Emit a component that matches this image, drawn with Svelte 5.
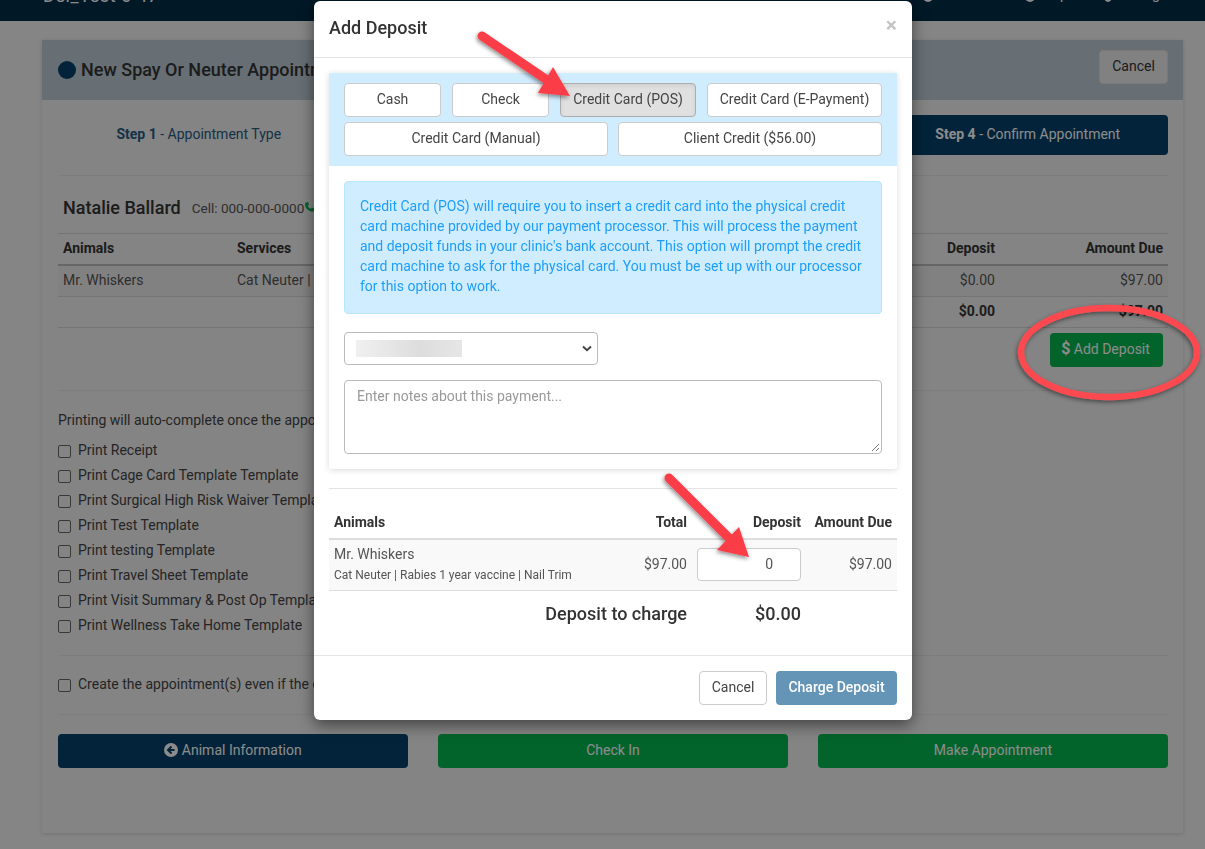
<script>
	const tabsTop = [
		{ label: 'Cash', w: 97 },
		{ label: 'Check', w: 97 },
		{ label: 'Credit Card (POS)', w: 136, active: true },
		{ label: 'Credit Card (E-Payment)', w: 175 }
	];
	const prints = [
		'Print Receipt',
		'Print Cage Card Template Template',
		'Print Surgical High Risk Waiver Template',
		'Print Test Template',
		'Print testing Template',
		'Print Travel Sheet Template',
		'Print Visit Summary & Post Op Template',
		'Print Wellness Take Home Template'
	];
</script>

<div class="page">
	<nav class="topbar">
		<span class="brand">Dei_Test 0 47</span>
		<span class="nav-right">
			<i class="ic first"></i>
			<i class="ic"></i><span>Help</span>
			<i class="ic small"></i><span>Settings</span>
		</span>
	</nav>

	<section class="card">
		<header class="card-head">
			<h2><span class="dot"></span> New Spay Or Neuter Appointment</h2>
			<button class="btn ghost">Cancel</button>
		</header>
		<div class="card-body">
			<div class="steps">
				<div class="step first"><b>Step 1</b> - Appointment Type</div>
				<div class="step"></div>
				<div class="step"></div>
				<div class="step on"><b>Step 4</b> - Confirm Appointment</div>
			</div>
			<hr class="steps-hr" />
			<div class="client"><span class="name">Natalie Ballard</span><span class="cell">Cell: 000-000-0000</span>
				<svg class="phone" viewBox="0 0 12 12" width="11" height="12"><path d="M2 1 L4.500 .5 L5.500 3.500 L4 4.500 Q5 7 7.500 8 L8.500 6.500 L11.500 7.500 L11 10 Q10 11.500 8 11 Q1.500 9 1 3 Q1 2 2 1Z" fill="#06b64f"/></svg>
			</div>
			<div class="bill">
				<div class="bill-row head"><span class="c1">Animals</span><span class="c2">Services</span><span class="c3">Deposit</span><span class="c4">Amount Due</span></div>
				<div class="bill-row item"><span class="c1">Mr. Whiskers</span><span class="c2">Cat Neuter | Rabies</span><span class="c3">$0.00</span><span class="c4">$97.00</span></div>
				<div class="bill-row sum"><span class="c1"></span><span class="c2"></span><span class="c3">$0.00</span><span class="c4">$97.00</span></div>
			</div>
			<div class="deposit-line"><button class="btn green add"><b>$</b> Add Deposit</button></div>
			<hr class="hr-a" />
			<p class="print-note">Printing will auto-complete once the appointment is created.</p>
			<div class="prints">
				{#each prints as p}
					<label class="chk"><span class="box"></span>{p}</label>
				{/each}
			</div>
			<hr class="hr-b" />
			<label class="chk create"><span class="box"></span>Create the appointment(s) even if the clinic is full</label>
			<hr class="hr-c" />
			<div class="actions">
				<button class="btn navy">
					<svg viewBox="0 0 14 14" width="14" height="14"><circle cx="7" cy="7" r="7" fill="#fff"/><path d="M7.500 3.500 L4 7 L7.500 10.500 M4.500 7 H10.500" fill="none" stroke="#054169" stroke-width="2"/></svg>
					Animal Information</button>
				<button class="btn green">Check In</button>
				<button class="btn green">Make Appointment</button>
			</div>
		</div>
	</section>
</div>

<div class="backdrop"></div>

<div class="modal" role="dialog">
	<div class="modal-head">
		<h4>Add Deposit</h4>
		<span class="close">×</span>
	</div>
	<div class="modal-body">
		<div class="pay-panel">
			<div class="tabs">
				<div class="tab-row">
					{#each tabsTop as t}
						<button class="tab" class:active={t.active} style="width:{t.w}px">{t.label}</button>
					{/each}
				</div>
				<div class="tab-row second">
					<button class="tab half">Credit Card (Manual)</button>
					<button class="tab half">Client Credit ($56.00)</button>
				</div>
			</div>
			<div class="pay-body">
				<div class="alert">Credit Card (POS) will require you to insert a credit card into the physical credit card machine provided by our payment processor. This will process the payment and deposit funds in your clinic's bank account. This option will prompt the credit card machine to ask for the physical card. You must be set up with our processor for this option to work.</div>
				<div class="select">
					<span class="blur"></span>
					<svg viewBox="0 0 10 7" width="10" height="7"><path d="M1 1.500 L5 5.200 L9 1.500" fill="none" stroke="#444" stroke-width="2"/></svg>
				</div>
				<div class="notes">Enter notes about this payment...
					<svg viewBox="0 0 9 9" width="9" height="9"><path d="M1 8 L8 1 M5 8 L8 5" stroke="#777" stroke-width="1"/></svg>
				</div>
			</div>
		</div>
		<hr class="modal-hr" />
		<div class="dep head"><span class="a">Animals</span><span class="t">Total</span><span class="d">Deposit</span><span class="e">Amount Due</span></div>
		<div class="dep item">
			<span class="a">Mr. Whiskers<small>Cat Neuter | Rabies 1 year vaccine | Nail Trim</small></span>
			<span class="t">$97.00</span>
			<span class="d"><span class="input">0</span></span>
			<span class="e">$97.00</span>
		</div>
		<div class="dep charge"><span class="a"></span><span class="t">Deposit to charge</span><span class="d">$0.00</span><span class="e"></span></div>
	</div>
	<div class="modal-foot">
		<button class="btn plain">Cancel</button>
		<button class="btn charge-btn">Charge Deposit</button>
	</div>
</div>

<svg class="marks" width="1205" height="849" viewBox="0 0 1205 849">
	<defs>
		<filter id="sh" x="-20%" y="-20%" width="140%" height="140%">
			<feDropShadow dx="-1" dy="2" stdDeviation="2" flood-color="#000" flood-opacity="0.45" />
		</filter>
	</defs>
	<g filter="url(#sh)" fill="#fb3d46">
		<path d="M482 36 L550 82" stroke="#fb3d46" stroke-width="9" stroke-linecap="round" />
		<path d="M538 93 L570 96 L553 67Z" />
		<path d="M669 478 L732 541" stroke="#fb3d46" stroke-width="9" stroke-linecap="round" />
		<path d="M717 550 L749 557 L739 527Z" />
		<ellipse cx="1109" cy="352.500" rx="88" ry="44.500" fill="none" stroke="#fb4a50" stroke-width="6.500" />
	</g>
</svg>

<style>
	:global(body) {
		margin: 0;
		font-family: Roboto, 'Liberation Sans', sans-serif;
		font-size: 14px;
		color: #333;
		background: #f2f2f2;
		overflow: hidden;
	}

	.page {
		height: 849px;
		overflow: hidden;
	}

	.topbar {
		height: 21px;
		background: #032c45;
		color: #fff;
		display: flex;
		justify-content: space-between;
		align-items: flex-end;
		padding: 0 38px 0 43px;
		overflow: hidden;
	}

	.brand {
		margin-bottom: 15px;
		font-size: 18px;
		line-height: 20px;
		letter-spacing: 0.6px;
	}

	.nav-right {
		display: flex;
		align-items: flex-end;
		margin-bottom: 17px;
		line-height: 20px;
	}

	.ic {
		width: 10px;
		height: 10px;
		margin: 0 4px 2px 0;
		background: #fff;
		border-radius: 50%;
	}

	.ic.first {
		margin-right: 92px;
	}

	.ic.small {
		width: 8px;
		margin-left: 36px;
	}

	.card {
		margin: 19px 22px 0 42px;
		height: 793px;
		background: #f0f0f0;
		box-shadow: 0 1px 4px rgba(0, 0, 0, 0.15);
	}

	.card-head {
		height: 60px;
		box-sizing: border-box;
		background: #bccad3;
		padding: 0 15px 0 16px;
		display: flex;
		justify-content: space-between;
		align-items: center;
	}

	h2 {
		margin: 0;
		padding-bottom: 2px;
		font-size: 18px;
		font-weight: 500;
		color: #333;
		display: flex;
		align-items: center;
		gap: 5px;
	}

	.dot {
		width: 18px;
		height: 18px;
		border-radius: 50%;
		background: #054169;
		margin-top: 2px;
	}

	.btn {
		font: inherit;
		border-radius: 4px;
		border: 1px solid transparent;
		height: 34px;
		padding: 0 0 2px;
		cursor: pointer;
	}

	.ghost {
		width: 69px;
		margin-top: -7px;
		background: #ececec;
		border-color: #ddd;
		color: #333;
	}

	.card-body {
		padding: 15px 15px 0 16px;
	}

	.steps {
		display: grid;
		grid-template-columns: 1fr 1fr 1fr 1fr;
	}

	.step {
		height: 40px;
		box-sizing: border-box;
		padding-bottom: 2px;
		display: flex;
		align-items: center;
		justify-content: center;
		gap: 3.500px;
		color: #275b80;
		border-radius: 4px;
	}

	.step.first {
		padding-left: 4px;
	}

	.step.on {
		background: #054169;
		color: #fff;
		padding-right: 3px;
	}

	.step b {
		font-weight: 700;
	}

	hr {
		border: 0;
		border-top: 1px solid #e4e4e4;
		margin: 0;
	}

	.steps-hr {
		margin-top: 20px;
	}

	.client {
		height: 57px;
		display: flex;
		align-items: center;
		padding: 6px 5px 0;
		box-sizing: border-box;
	}

	.name {
		font-size: 18px;
		font-weight: 500;
	}

	.cell {
		margin-left: 11px;
		font-size: 13.500px;
		color: #555;
	}

	.phone {
		margin-top: -2px;
	}

	.bill-row {
		display: flex;
		height: 31px;
		align-items: center;
		padding: 0 5px 2px;
		border-bottom: 1px solid #d4d4d4;
		box-sizing: border-box;
	}

	.bill-row.head {
		height: 33px;
		font-weight: 700;
		border-top: 1px solid #d4d4d4;
		border-bottom: 2px solid #bbb;
	}

	.bill-row.item {
		background: #ececec;
		color: #555;
	}

	.bill-row.sum {
		font-weight: 700;
	}

	.c1 {
		width: 174px;
	}

	.c2 {
		flex: 1;
	}

	.c3 {
		width: 100px;
		text-align: right;
	}

	.c4 {
		width: 168px;
		text-align: right;
	}

	.deposit-line {
		display: flex;
		justify-content: flex-end;
		box-sizing: border-box;
		padding: 5px 5px 0 0;
		height: 39px;
	}

	.add {
		width: 113px;
		padding-right: 2px;
	}

	.add b {
		font-weight: 700;
		font-size: 16px;
		line-height: 14px;
	}

	.green {
		background: #06b64f;
		color: #fff;
	}

	.navy {
		background: #054169;
		color: #fff;
	}

	.hr-a {
		margin-top: 23px;
	}

	.print-note {
		margin: 19px 0 0;
		line-height: 20px;
		color: #444;
	}

	.prints {
		margin-top: 7px;
	}

	.chk {
		display: flex;
		align-items: center;
		height: 25px;
		gap: 7px;
		color: #444;
	}

	.box {
		width: 11px;
		height: 11px;
		border: 1px solid #666;
		border-radius: 2px;
		margin-top: 3px;
	}

	.hr-b {
		margin-top: 18px;
	}

	.create {
		margin-top: 15px;
	}

	.hr-c {
		margin-top: 18px;
	}

	.actions {
		margin-top: 19px;
		display: grid;
		grid-template-columns: repeat(3, 350px);
		gap: 30px;
	}

	.actions svg {
		vertical-align: -2px;
	}

	.backdrop {
		position: fixed;
		inset: 0;
		background: rgba(0, 0, 0, 0.45);
	}

	.modal {
		position: absolute;
		left: 314px;
		top: 1px;
		width: 598px;
		height: 719px;
		background: #fff;
		border-radius: 6px;
		box-shadow: 0 5px 15px rgba(0, 0, 0, 0.5);
		display: flex;
		flex-direction: column;
	}

	.modal-head {
		height: 57px;
		box-sizing: border-box;
		border-bottom: 1px solid #e5e5e5;
		padding: 0 15px 3px;
		display: flex;
		justify-content: space-between;
		align-items: center;
	}

	h4 {
		margin: 0;
		font-size: 18px;
		font-weight: 500;
	}

	.close {
		font-size: 21px;
		font-weight: 700;
		color: #c4c4c4;
		margin-top: -5px;
	}

	.modal-body {
		flex: 1;
		padding: 15px;
	}

	.pay-panel {
		box-shadow: 0 1px 6px rgba(0, 0, 0, 0.15);
		border-radius: 3px;
	}

	.tabs {
		background: #d0ecff;
		padding: 10px 15px;
		display: flex;
		flex-direction: column;
		gap: 5px;
	}

	.tab-row {
		display: flex;
		gap: 11px;
	}

	.tab-row.second {
		gap: 10px;
	}

	.tab {
		font: inherit;
		height: 34px;
		padding: 0 0 2px;
		background: #fff;
		border: 1px solid #ccc;
		border-radius: 4px;
		color: #444;
	}

	.tab.half {
		flex: 1;
	}

	.tab.active {
		background: #e0e0e0;
		border-color: #adadad;
		box-shadow: inset 0 2px 4px rgba(0, 0, 0, 0.08);
	}

	.pay-body {
		padding: 15px;
	}

	.alert {
		background: #d0ecff;
		border: 1px solid #b9e6fb;
		border-radius: 4px;
		color: #1e9ef8;
		padding: 14px 15px 16px;
		line-height: 20px;
		box-sizing: border-box;
		height: 133px;
	}

	.select {
		margin-top: 18px;
		width: 254px;
		height: 33px;
		box-sizing: border-box;
		border: 1px solid #bbb;
		border-radius: 4px;
		display: flex;
		align-items: center;
		justify-content: space-between;
		padding: 0 5px 0 11px;
	}

	.blur {
		width: 106px;
		height: 17px;
		background: linear-gradient(90deg, #f0f0f0, #ddd 60%, #e6e6e6);
	}

	.notes {
		position: relative;
		margin-top: 15px;
		height: 74px;
		box-sizing: border-box;
		border: 1px solid #bbb;
		border-radius: 4px;
		padding: 5px 12px;
		color: #999;
		line-height: 20px;
	}

	.notes svg {
		position: absolute;
		right: 1px;
		bottom: 1px;
	}

	.modal-hr {
		margin-top: 19px;
	}

	.dep {
		display: flex;
		align-items: center;
		padding: 0 5px;
	}

	.dep .a {
		flex: 1;
	}

	.dep .t {
		text-align: right;
	}

	.dep .d {
		width: 104px;
		margin-left: 10px;
		text-align: right;
		flex: none;
	}

	.dep .e {
		width: 91px;
		text-align: right;
		flex: none;
	}

	.dep.head {
		height: 51px;
		padding-top: 16px;
		box-sizing: border-box;
		border-bottom: 2px solid #ddd;
		font-weight: 700;
	}

	.dep.item {
		height: 51px;
		box-sizing: border-box;
		padding-bottom: 2px;
		background: #f9f9f9;
		border-bottom: 1px solid #ddd;
		color: #555;
	}

	.dep small {
		display: block;
		font-size: 12px;
		margin-top: 6px;
	}

	.input {
		display: block;
		height: 33px;
		line-height: 31px;
		box-sizing: border-box;
		background: #fff;
		border: 1px solid #ccc;
		border-radius: 4px;
		padding-right: 27px;
	}

	.dep.charge {
		height: 46px;
		box-sizing: border-box;
		padding-bottom: 2px;
		font-size: 18px;
		font-weight: 500;
	}

	.modal-foot {
		height: 65px;
		box-sizing: border-box;
		border-top: 1px solid #e5e5e5;
		padding: 15px;
		display: flex;
		justify-content: flex-end;
		gap: 9px;
	}

	.plain {
		width: 68px;
		background: #fff;
		border-color: #ccc;
		color: #444;
	}

	.charge-btn {
		width: 121px;
		background: #6494b6;
		color: #fff;
		font-weight: 500;
	}

	.marks {
		position: absolute;
		left: 0;
		top: 0;
		pointer-events: none;
	}
</style>
